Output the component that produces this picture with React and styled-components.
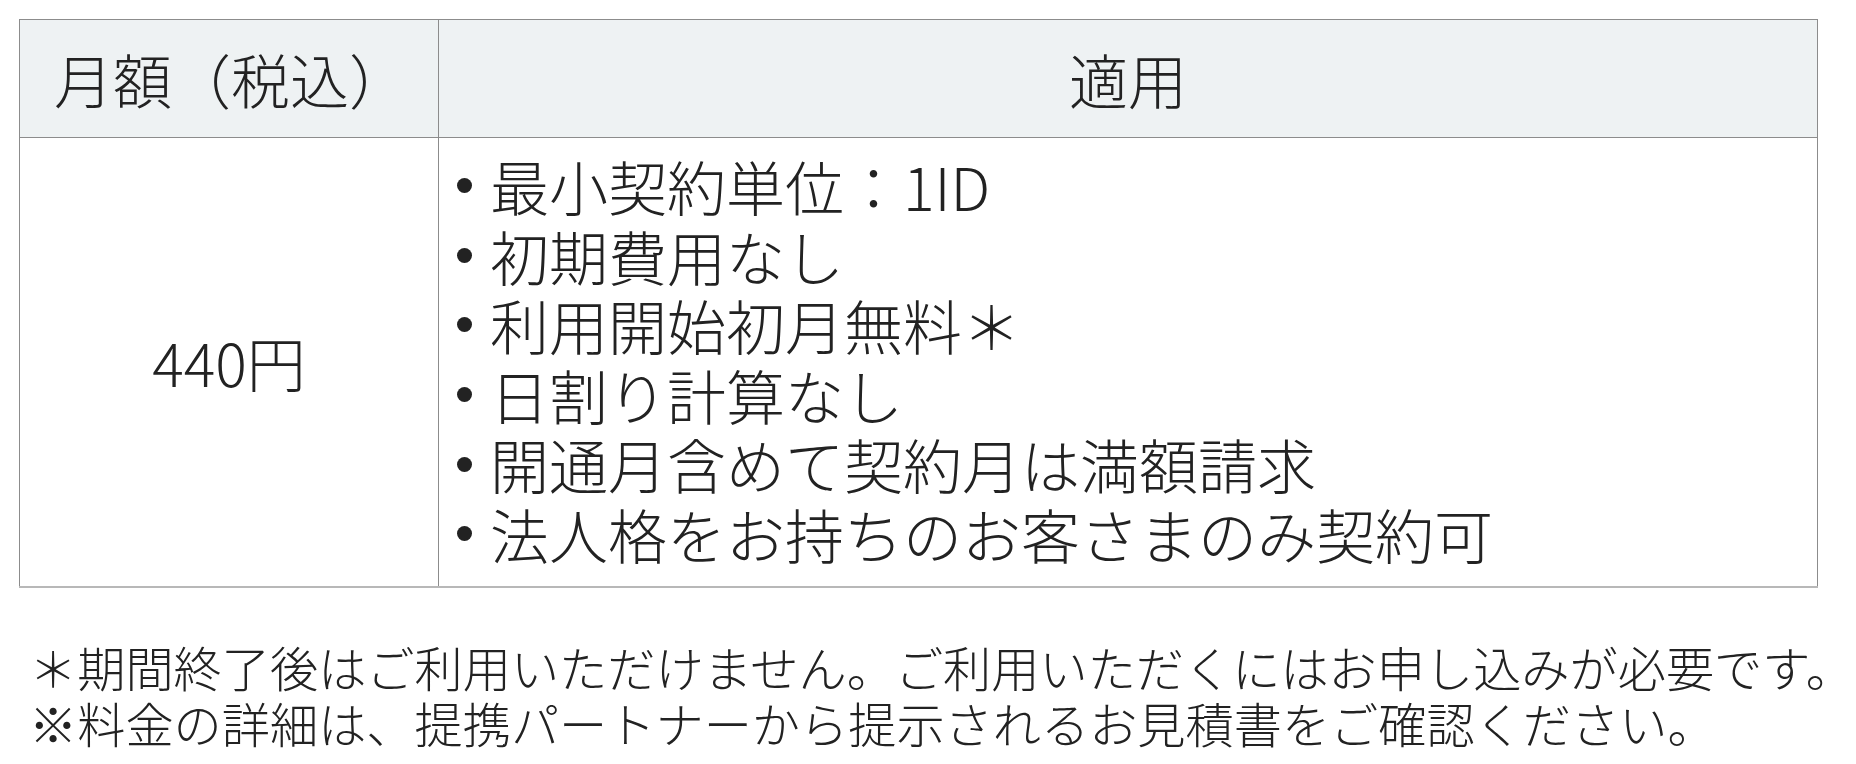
import styled, { createGlobalStyle } from "styled-components";

const GlobalStyle = createGlobalStyle`
  body {
    margin: 0;
    background: #fff;
    color: #222;
    font-family: "Noto Sans CJK JP", "Noto Sans", sans-serif;
    font-weight: 300;
  }
`;

const Page = styled.div`
  padding: 19px 0 0 19px;
`;

const PriceTable = styled.table`
  width: 1799px;
  table-layout: fixed;
  border-collapse: collapse;
  border: 1px solid #8c8c8c;
  border-bottom: 2px solid #b8b8b8;
`;

const HeadCell = styled.th`
  height: 117px;
  padding: 0;
  text-indent: ${(props) => props.indent || "0"};
  width: ${(props) => props.width || "auto"};
  background: #eef2f3;
  border: 1px solid #8c8c8c;
  font-size: 59px;
  font-weight: 300;
  text-align: center;
  vertical-align: middle;
`;

const Cell = styled.td`
  border: 1px solid #8c8c8c;
  border-bottom: 0;
  font-size: 59px;
  line-height: 69.6px;
  vertical-align: middle;
  text-align: ${(props) => props.align || "left"};
  padding: ${(props) => props.pad || "0"};
`;

const Terms = styled.ul`
  list-style: none;
  margin: 0;
  padding: 0;
`;

const Term = styled.li`
  display: flex;
  align-items: center;
  gap: 18px;
  &::before {
    content: "";
    flex: none;
    width: 15px;
    height: 15px;
    border-radius: 50%;
    background: #222;
  }
`;

const Notes = styled.div`
  margin-top: 50px;
  padding-left: 10px;
  font-size: 48.2px;
  line-height: 56px;
  white-space: nowrap;
`;

const terms = [
  "最小契約単位：1ID",
  "初期費用なし",
  "利用開始初月無料＊",
  "日割り計算なし",
  "開通月含めて契約月は満額請求",
  "法人格をお持ちのお客さまのみ契約可",
];

export default function App() {
  return (
    <Page>
      <GlobalStyle />
      <PriceTable>
        <thead>
          <tr>
            <HeadCell width="418px" indent="4px">月額（税込）</HeadCell>
            <HeadCell>適用</HeadCell>
          </tr>
        </thead>
        <tbody>
          <tr>
            <Cell align="center">440円</Cell>
            <Cell pad="13px 0 17px 18px">
              <Terms>
                {terms.map((t) => (
                  <Term key={t}>{t}</Term>
                ))}
              </Terms>
            </Cell>
          </tr>
        </tbody>
      </PriceTable>
      <Notes>
        <div>＊期間終了後はご利用いただけません。ご利用いただくにはお申し込みが必要です。</div>
        <div>※料金の詳細は、提携パートナーから提示されるお見積書をご確認ください。</div>
      </Notes>
    </Page>
  );
}
